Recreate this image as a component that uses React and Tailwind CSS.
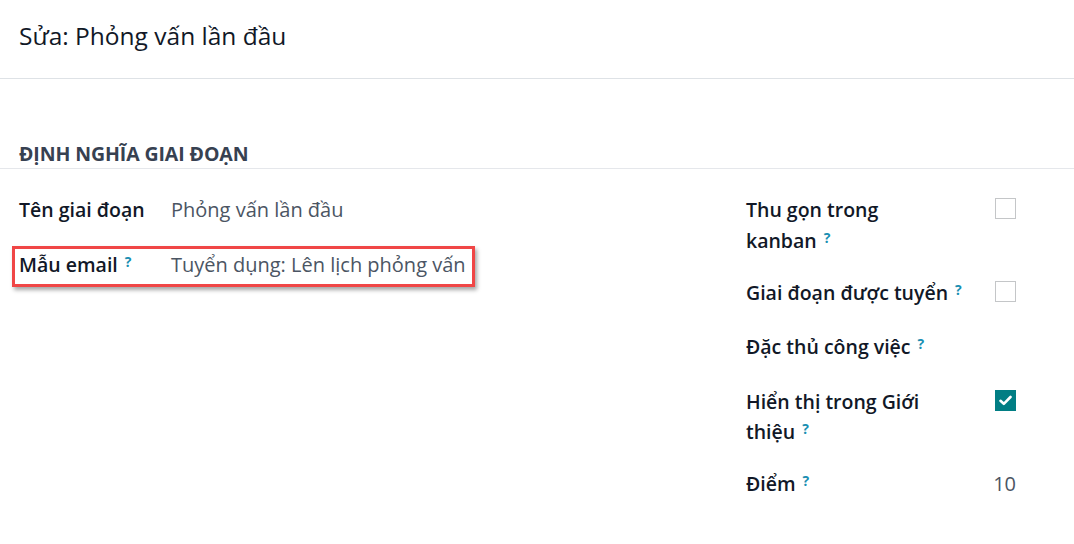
import React from "react";

const Help = () => (
  <sup className="ml-[7px] text-[14px] font-bold text-[#1a8fb2] relative top-[-5px]">?</sup>
);

const Checkbox = ({ checked }) =>
  checked ? (
    <div className="mt-[3px] w-[21px] h-[21px] bg-[#017e84] flex items-center justify-center">
      <svg width="13" height="11" viewBox="0 0 13 11">
        <path d="M1.5 5.8 L4.8 8.8 L11.5 2" fill="none" stroke="white" strokeWidth="2.6" strokeLinecap="round" strokeLinejoin="round" />
      </svg>
    </div>
  ) : (
    <div className="mt-[3px] w-[21px] h-[21px] border border-[#c4c6c8] bg-white" />
  );

export default function App() {
  return (
    <div
      className="w-[1074px] h-[544px] bg-white overflow-hidden text-[#1f2937]"
      style={{ fontFamily: '"Open Sans", "Noto Sans", sans-serif' }}
    >
      <div className="h-[79px] border-b border-[#dee2e6] flex items-center px-[19px] pb-[5px]">
        <h1 className="text-[24.5px] text-[#111827] leading-none">Sửa: Phỏng vấn lần đầu</h1>
      </div>

      <div className="mt-[61px] border-b border-[#e5e7eb] h-[29px] flex items-center px-[19px]">
        <h2 className="text-[19.5px] font-bold text-[#374151] leading-none tracking-[-0.1px]">ĐỊNH NGHĨA GIAI ĐOẠN</h2>
      </div>

      <div className="flex pt-[26px] text-[19.5px] leading-[30.5px]">
        <div className="w-[746px] pl-[19px]">
          <div className="flex">
            <div className="w-[152px] font-semibold text-[#111827]">Tên giai đoạn</div>
            <div className="text-[20px] text-[#4b5563]">Phỏng vấn lần đầu</div>
          </div>
          <div className="relative flex mt-[24px]">
            <div className="absolute left-[-7px] top-[-4px] w-[463px] h-[41px] border-[3px] border-[#f04646] shadow-[2px_3px_4px_rgba(0,0,0,0.35)] pointer-events-none" />
            <div className="w-[152px] font-semibold text-[#111827]">
              Mẫu email
              <Help />
            </div>
            <div className="text-[20px] text-[#4b5563]">Tuyển dụng: Lên lịch phỏng vấn</div>
          </div>
        </div>

        <div className="w-[270px] flex flex-col">
          <div className="flex justify-between">
            <div className="font-semibold text-[#111827]">
              Thu gọn trong
              <br />
              kanban
              <Help />
            </div>
            <Checkbox />
          </div>
          <div className="flex justify-between mt-[21.5px]">
            <div className="font-semibold text-[#111827]">
              Giai đoạn được tuyển
              <Help />
            </div>
            <Checkbox />
          </div>
          <div className="flex justify-between mt-[23.5px]">
            <div className="font-semibold text-[#111827]">
              Đặc thủ công việc
              <Help />
            </div>
          </div>
          <div className="flex justify-between mt-[24.5px]">
            <div className="font-semibold text-[#111827]">
              Hiển thị trong Giới
              <br />
              thiệu
              <Help />
            </div>
            <Checkbox checked />
          </div>
          <div className="flex justify-between mt-[21.5px]">
            <div className="font-semibold text-[#111827]">
              Điểm
              <Help />
            </div>
            <div className="text-[20px] text-[#4b5563]">10</div>
          </div>
        </div>
      </div>
    </div>
  );
}
